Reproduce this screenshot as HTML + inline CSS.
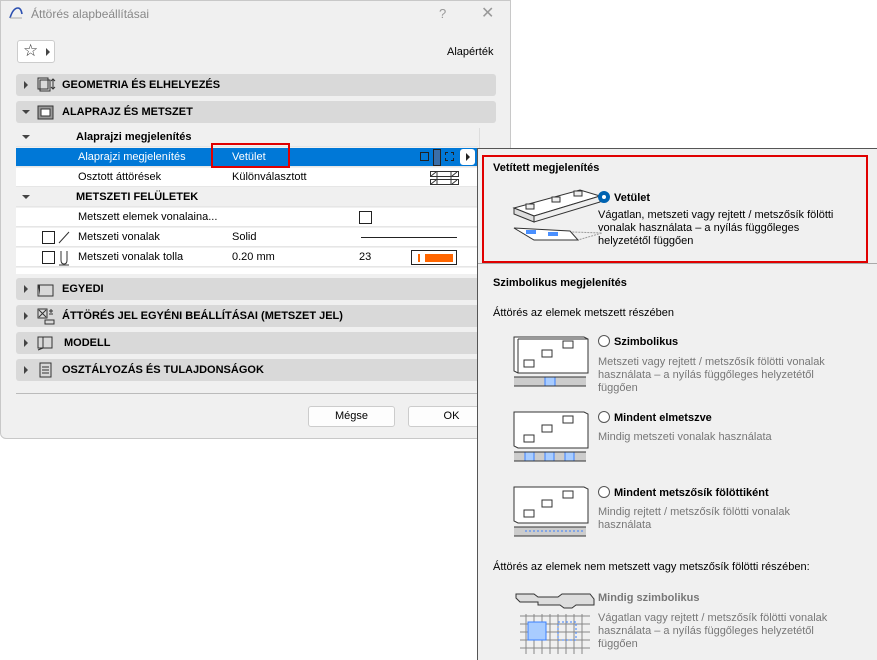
<!DOCTYPE html>
<html><head><meta charset="utf-8"><style>
*{margin:0;padding:0;box-sizing:border-box}
body{width:877px;height:660px;background:#fff;font-family:"Liberation Sans",sans-serif;font-size:11px;color:#000;position:relative;overflow:hidden}
.a{position:absolute}
.dlg{left:0;top:0;width:511px;height:439px;background:#f0f0f0;border:1px solid #c8c8c8;border-radius:0 0 6px 6px}
.hdr{left:16px;width:480px;height:22px;background:#d9d9d9;border-radius:3px;font-weight:bold;font-size:11px}
.hdr .t{position:absolute;left:46px;top:5px}
.tri{position:absolute;left:8px;top:7px;width:0;height:0;border-left:4px solid #444;border-top:4px solid transparent;border-bottom:4px solid transparent}
.trd{position:absolute;width:0;height:0;border-top:4px solid #444;border-left:4px solid transparent;border-right:4px solid transparent}
.row{left:16px;width:462px;height:19px;background:#fff;border-bottom:1px solid #e6e6e6}
.row span{position:absolute;top:3px}
.gray{color:#777}
.b{font-weight:bold}
.rad{display:inline-block;width:12px;height:12px;border:1px solid #555;border-radius:50%;vertical-align:-2px;margin-right:4px;background:#fff}
.btn{height:21px;background:#fdfdfd;border:1px solid #ccc;border-radius:3px;text-align:center;line-height:19px}
</style></head><body>
<div class="a dlg"></div>
<!-- title -->
<svg class="a" style="left:8px;top:6px" width="16" height="14"><path d="M2 12 Q5 2 10 2 Q13 2 14 8" stroke="#2b4fb0" stroke-width="1.6" fill="none"/><path d="M2 12 L14 12" stroke="#aaa"/></svg>
<div class="a" style="left:31px;top:7px;font-size:12px;color:#888">Áttörés alapbeállításai</div>
<div class="a" style="left:439px;top:6px;font-size:13px;color:#999">?</div>
<div class="a" style="left:481px;top:3px;font-size:16px;color:#999">✕</div>
<!-- favorites -->
<div class="a" style="left:17px;top:40px;width:38px;height:23px;border:1px solid #ccc;background:#fff;border-radius:3px"></div>
<div class="a" style="left:23px;top:41px;font-size:17px;color:#333">☆</div>
<div class="tri" style="left:46px;top:48px"></div>
<div class="a" style="left:447px;top:46px">Alapérték</div>
<!-- headers -->
<div class="a hdr" style="top:74px"><div class="tri"></div>
<svg class="a" style="left:20px;top:3px" width="20" height="17"><rect x="2" y="1" width="10" height="11" fill="none" stroke="#333"/><rect x="4" y="3" width="10" height="11" fill="none" stroke="#333"/><path d="M17 2v10M15 4l2-2 2 2M15 10l2 2 2-2" stroke="#333" fill="none"/></svg>
<span class="t" style="left:46px">GEOMETRIA ÉS ELHELYEZÉS</span></div>
<div class="a hdr" style="top:101px"><div class="trd" style="left:6px;top:9px"></div>
<svg class="a" style="left:20px;top:3px" width="20" height="17"><rect x="2" y="2" width="15" height="13" fill="#999" stroke="#333"/><rect x="5" y="5" width="9" height="7" fill="#fff" stroke="#333"/></svg>
<span class="t">ALAPRAJZ ÉS METSZET</span></div>
<!-- rows -->
<div class="a row" style="top:128px;background:#f0f0f0"><div class="trd" style="left:6px;top:7px"></div><span class="b" style="left:60px">Alaprajzi megjelenítés</span></div>
<div class="a row" style="top:148px;background:#0078d7;color:#fff"><span style="left:62px">Alaprajzi megjelenítés</span><span style="left:216px">Vetület</span>
<div class="a" style="left:404px;top:4px;width:9px;height:9px;border:1px solid #222"></div>
<div class="a" style="left:417px;top:1px;width:8px;height:17px;border:1px solid #222;background:#3a6ea8"></div>
<div class="a" style="left:429px;top:4px;width:9px;height:9px;border:1px dashed #222"></div>
<div class="a" style="left:444px;top:1px;width:15px;height:16px;border:1px solid #fff;border-radius:3px;background:#fff"><div class="tri" style="left:5px;top:3px;border-left-color:#222"></div></div></div>
<div class="a" style="left:211px;top:143px;width:79px;height:25px;border:2px solid #e00000"></div>
<div class="a row" style="top:168px"><span style="left:62px">Osztott áttörések</span><span style="left:216px">Különválasztott</span>
<svg class="a" style="left:414px;top:2px" width="30" height="16"><g stroke="#333" fill="none"><rect x="0.5" y="1.5" width="28" height="5"/><rect x="0.5" y="9.5" width="28" height="5"/><path d="M7 1v14M21 1v14M1 6l5-4M22 6l5-4M1 14l5-4M22 14l5-4"/></g></svg></div>
<div class="a row" style="top:188px;background:#f0f0f0"><div class="trd" style="left:6px;top:7px"></div><span class="b" style="left:60px">METSZETI FELÜLETEK</span></div>
<div class="a row" style="top:208px"><span style="left:62px">Metszett elemek vonalaina...</span><div class="a" style="left:343px;top:3px;width:13px;height:13px;border:1px solid #222"></div></div>
<div class="a row" style="top:228px"><div class="a" style="left:26px;top:3px;width:13px;height:13px;border:1px solid #222"></div><svg class="a" style="left:42px;top:3px" width="12" height="13"><path d="M1 12L11 1" stroke="#333"/></svg><span style="left:62px">Metszeti vonalak</span><span style="left:216px">Solid</span><div class="a" style="left:345px;top:9px;width:96px;height:1px;background:#222"></div></div>
<div class="a row" style="top:248px"><div class="a" style="left:26px;top:3px;width:13px;height:13px;border:1px solid #222"></div><svg class="a" style="left:42px;top:2px" width="12" height="16"><path d="M3 1v9q0 4 3 4t3-4V1M1 15h10" stroke="#333" fill="none"/></svg><span style="left:62px">Metszeti vonalak tolla</span><span style="left:216px">0.20 mm</span><span style="left:343px">23</span>
<div class="a" style="left:395px;top:2px;width:46px;height:15px;border:1px solid #222;background:#fff"><div class="a" style="left:6px;top:3px;width:2px;height:8px;background:#f60"></div><div class="a" style="left:13px;top:3px;width:28px;height:8px;background:#f60"></div></div></div>
<div class="a" style="left:16px;top:268px;width:462px;height:6px;background:#fff"></div>
<div class="a" style="left:479px;top:128px;width:1px;height:20px;background:#ddd"></div>
<!-- lower headers -->
<div class="a hdr" style="top:278px"><div class="tri"></div><svg class="a" style="left:20px;top:3px" width="20" height="17"><rect x="2" y="4" width="15" height="11" fill="none" stroke="#333"/><path d="M2 4h15l-13 0v11z" fill="#333"/></svg><span class="t">EGYEDI</span></div>
<div class="a hdr" style="top:305px"><div class="tri"></div><svg class="a" style="left:20px;top:2px" width="20" height="18"><rect x="2" y="2" width="9" height="9" fill="none" stroke="#333"/><path d="M3 3l7 7M10 3l-7 7M9 13h9v4H9zM13 4h4M13 7h4M15 2v4" stroke="#333" fill="none"/></svg><span class="t">ÁTTÖRÉS JEL EGYÉNI BEÁLLÍTÁSAI (METSZET JEL)</span></div>
<div class="a hdr" style="top:332px"><div class="tri"></div><svg class="a" style="left:20px;top:3px" width="20" height="17"><path d="M2 2h14v11H2zM7 2v11M2 15l5-2" stroke="#333" fill="none"/></svg><span class="t" style="left:48px">MODELL</span></div>
<div class="a hdr" style="top:359px"><div class="tri"></div><svg class="a" style="left:22px;top:3px" width="16" height="17"><rect x="2" y="1" width="11" height="14" fill="none" stroke="#333"/><path d="M4 5h7M4 8h7M4 11h7" stroke="#333"/></svg><span class="t">OSZTÁLYOZÁS ÉS TULAJDONSÁGOK</span></div>
<div class="a" style="left:16px;top:393px;width:480px;height:1px;background:#bbb"></div>
<div class="a btn" style="left:308px;top:406px;width:87px">Mégse</div>
<div class="a btn" style="left:408px;top:406px;width:87px">OK</div>
<!-- popup -->
<div class="a" style="left:477px;top:148px;width:400px;height:512px;background:#f0f0f0;border-left:1px solid #555;border-top:1px solid #555"></div>
<div class="a" style="left:482px;top:155px;width:386px;height:108px;border:2px solid #e00000"></div>
<div class="a" style="left:478px;top:263px;width:399px;height:1px;background:#aaa"></div>
<div class="a b" style="left:493px;top:162px">Vetített megjelenítés</div>
<svg class="a" style="left:512px;top:188px" width="100" height="55"><g stroke="#333" fill="#fff"><path d="M2 20L68 2 88 8 22 28z"/><path d="M2 20v6l20 8v-6z" fill="#ddd"/><path d="M22 28v6l66-20V8z" fill="#eee"/><path d="M14 16h8v5h-8zM40 9h8v5h-8zM62 3h8v5h-8z" fill="#eee"/></g><path d="M2 40L22 52 66 52 90 45 60 44" stroke="#999" fill="none" stroke-dasharray="2 1"/><path d="M2 40L58 43 66 52 22 52z" fill="#fff" stroke="#333"/><rect x="14" y="42" width="10" height="4" fill="#4a90ff"/><rect x="36" y="44" width="10" height="4" fill="#4a90ff"/></svg>
<div class="a b" style="left:598px;top:191px"><span class="rad" style="border:4px solid #0063b1;background:#fff"></span>Vetület</div>
<div class="a" style="left:598px;top:209px;line-height:13px">Vágatlan, metszeti vagy rejtett / metszősík fölötti<br>vonalak használata – a nyílás függőleges<br>helyzetétől függően</div>
<div class="a b" style="left:493px;top:277px">Szimbolikus megjelenítés</div>
<div class="a" style="left:493px;top:307px">Áttörés az elemek metszett részében</div>
<!-- symbolic figures -->
<svg class="a" style="left:512px;top:334px" width="100" height="56"><g stroke="#333" fill="#fff"><path d="M2 3h70l4 2v34H6l-4-2z"/><path d="M6 5h70M6 5v34" fill="none"/><path d="M12 26h10v7H12zM30 16h10v7H30zM51 7h10v7H51z"/></g><rect x="2" y="43" width="72" height="9" fill="#ccc"/><rect x="33" y="43" width="10" height="9" fill="#a8ccff" stroke="#3a80ff"/><path d="M2 43h72M2 52h72" stroke="#333"/></svg>
<div class="a b" style="left:598px;top:335px"><span class="rad"></span>Szimbolikus</div>
<div class="a gray" style="left:598px;top:356px;line-height:13px">Metszeti vagy rejtett / metszősík fölötti vonalak<br>használata – a nyílás függőleges helyzetétől<br>függően</div>
<svg class="a" style="left:512px;top:409px" width="100" height="56"><g stroke="#333" fill="#fff"><path d="M2 3h70l4 2v34H6l-4-2z"/><path d="M12 26h10v7H12zM30 16h10v7H30zM51 7h10v7H51z"/></g><rect x="2" y="43" width="72" height="9" fill="#ccc"/><g fill="#a8ccff" stroke="#3a80ff"><rect x="13" y="43" width="9" height="9"/><rect x="33" y="43" width="9" height="9"/><rect x="53" y="43" width="9" height="9"/></g><path d="M2 43h72M2 52h72" stroke="#333"/></svg>
<div class="a b" style="left:598px;top:411px"><span class="rad"></span>Mindent elmetszve</div>
<div class="a gray" style="left:598px;top:431px">Mindig metszeti vonalak használata</div>
<svg class="a" style="left:512px;top:484px" width="100" height="56"><g stroke="#333" fill="#fff"><path d="M2 3h70l4 2v34H6l-4-2z"/><path d="M12 26h10v7H12zM30 16h10v7H30zM51 7h10v7H51z"/></g><rect x="2" y="43" width="72" height="9" fill="#ccc"/><path d="M2 43h72M2 52h72" stroke="#333"/><path d="M13 47h60" stroke="#3a80ff" stroke-dasharray="2 2"/></svg>
<div class="a b" style="left:598px;top:486px"><span class="rad"></span>Mindent metszősík fölöttiként</div>
<div class="a gray" style="left:598px;top:506px;line-height:13px">Mindig rejtett / metszősík fölötti vonalak<br>használata</div>
<div class="a" style="left:493px;top:561px">Áttörés az elemek nem metszett vagy metszősík fölötti részében:</div>
<svg class="a" style="left:514px;top:590px" width="90" height="64"><path d="M2 4h18l4 3h20l4-3h28l4 5v6H62l-4 3h-8l-4-3H24v-3H6L2 8z" fill="#ddd" stroke="#333"/><g stroke="#888"><path d="M6 26h70M6 34h70M6 42h70M6 50h70M6 58h70M12 24v40M20 24v40M28 24v40M36 24v40M44 24v40M52 24v40M60 24v40M68 24v40"/></g><rect x="14" y="32" width="18" height="18" fill="#a8ccff" stroke="#3a80ff"/><rect x="44" y="32" width="18" height="18" fill="none" stroke="#3a80ff" stroke-dasharray="2 2"/></svg>
<div class="a b gray" style="left:598px;top:592px">Mindig szimbolikus</div>
<div class="a gray" style="left:598px;top:612px;line-height:13px">Vágatlan vagy rejtett / metszősík fölötti vonalak<br>használata – a nyílás függőleges helyzetétől<br>függően</div>
</body></html>
